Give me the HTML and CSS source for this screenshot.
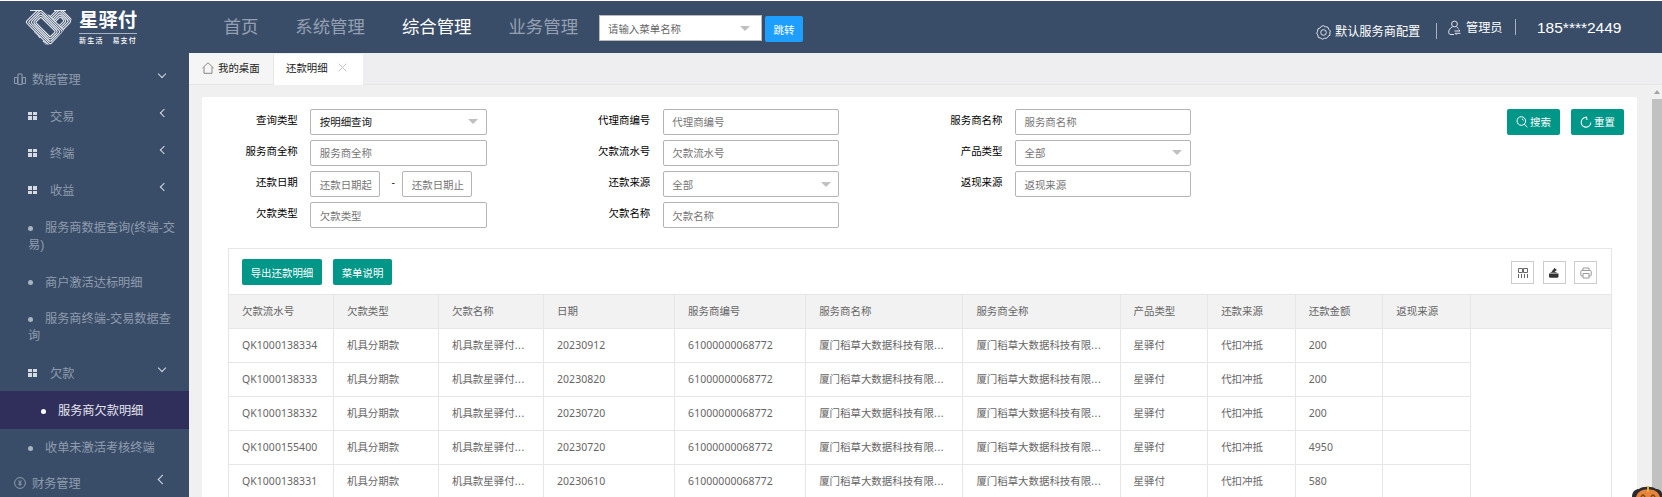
FILE: index.html
```html
<!DOCTYPE html>
<html lang="zh-CN">
<head>
<meta charset="utf-8">
<title>还款明细</title>
<link rel="stylesheet" href="styles.css">
</head>
<body>
<div class="app">
  <aside class="side">
    <div class="logo">
      <svg class="logo-mark" width="47" height="36" viewBox="0 0 47 36" fill="none">
        <clipPath id="heart"><path d="M5 1H17L23 6L29 1H41L46.500 8V13L26 35.500H20.500L0 13V8Z"/></clipPath>
        <g clip-path="url(#heart)" stroke="#e8ecf1" stroke-width="1.100">
          <g transform="translate(33 14) rotate(-45)">
            <rect x="-25" y="-10" width="37" height="20" rx="2"/>
            <rect x="-25" y="-8.200" width="35.500" height="16.400" rx="2"/>
            <rect x="-25" y="-6.400" width="34" height="12.800" rx="2"/>
            <rect x="-25" y="-4.600" width="32.500" height="9.200" rx="2"/>
            <rect x="-25" y="-2.800" width="31" height="5.600" rx="1"/>
          </g>
          <g transform="translate(20.500 18) rotate(45)">
            <rect x="-17.500" y="-10.600" width="35" height="21.200" rx="2" fill="#3a4d68"/>
            <rect x="-15.700" y="-8.900" width="31.400" height="17.800" rx="2"/>
            <rect x="-13.900" y="-7.200" width="27.800" height="14.400" rx="2"/>
            <rect x="-12.100" y="-5.500" width="24.200" height="11" rx="2"/>
            <rect x="-10.300" y="-3.800" width="20.600" height="7.600" rx="1"/>
          </g>
          <path d="M5 1.500H17M29 1.500H41"/>
        </g>
      </svg>
      <div class="logo-text">
        <div class="logo-name">星驿付</div>
        <div class="logo-sub"><span>新生活</span><span>易支付</span></div>
      </div>
    </div>
    <nav class="menu">
      <div class="m top"><svg class="ico" width="12" height="12" viewBox="0 0 12 12" fill="none" stroke="#8f9cae"><path d="M.5 4.500H3.500V10.500H.5ZM4 1H8V11.500H4ZM8.500 4.500H11.500V10.500H8.500Z"/></svg><span>数据管理</span><i class="down"></i></div>
      <div class="m sub"><b class="win"></b><span>交易</span><i class="left"></i></div>
      <div class="m sub"><b class="win"></b><span>终端</span><i class="left"></i></div>
      <div class="m sub"><b class="win"></b><span>收益</span><i class="left"></i></div>
      <div class="m leaf two"><b class="dot"></b>服务商数据查询(终端-交<br>易)</div>
      <div class="m leaf"><b class="dot"></b>商户激活达标明细</div>
      <div class="m leaf two"><b class="dot"></b>服务商终端-交易数据查<br>询</div>
      <div class="m sub"><b class="win"></b><span>欠款</span><i class="down"></i></div>
      <div class="m leaf active"><b class="dot"></b>服务商欠款明细</div>
      <div class="m leaf"><b class="dot"></b>收单未激活考核终端</div>
      <div class="m top last"><svg class="ico" width="12" height="12" viewBox="0 0 12 12" fill="none" stroke="#8f9cae"><circle cx="6" cy="6" r="5.400"/><path d="M6 3.500V9M4.300 3.500L6 5.500L7.700 3.500M4.300 6H7.700M4.300 7.500H7.700" stroke-width=".8"/></svg><span>财务管理</span><i class="left big"></i></div>
    </nav>
  </aside>
  <div class="main">
    <header class="head">
      <nav class="nav"><a>首页</a><a>系统管理</a><a class="on">综合管理</a><a>业务管理</a></nav>
      <div class="jump"><span>请输入菜单名称</span><i class="tri"></i></div>
      <button class="go">跳转</button>
      <div class="user">
        <div class="cfg"><svg width="15" height="15" viewBox="0 0 15 15" fill="none" stroke="#dfe4ea"><path d="M7.500 .7L9.400 1.800L11.700 2L12.700 4.200L14.300 5.900L13.800 8L14 10.200L12 11.400L10.600 13.300L8.500 13.300L6.500 14.200L4.500 13.100L2.300 12.400L1.900 10.100L.7 8.200L1.600 6.200L1.900 3.900L4 3L5.400 1.300Z"/><circle cx="7.500" cy="7.500" r="2.800"/></svg><span>默认服务商配置</span></div>
        <u class="bar low"></u>
        <div class="role"><svg width="13" height="16" viewBox="0 0 13 16" fill="none" stroke="#dfe4ea"><circle cx="6.500" cy="4" r="2.900"/><path d="M4.500 6.800C2 8 .7 10 .7 12.300C.7 13.800 1.500 14.500 3 14.500H6M8.500 6.800L10.500 8.500M6.500 11H12L10.500 9.500M12.500 13.300H7L8.500 14.800"/></svg><span>管理员</span></div>
        <u class="bar"></u>
        <div class="phone">185****2449</div>
      </div>
    </header>
    <div class="tabs">
      <div class="tab home"><svg width="12" height="12" viewBox="0 0 12 12" fill="none" stroke="#888"><path d="M.5 6L6 .8L11.500 6M2 5V11.300H10V5"/></svg><span>我的桌面</span></div>
      <div class="tab cur"><span>还款明细</span><svg width="9" height="9" viewBox="0 0 9 9" stroke="#c4c4c4"><path d="M.7 .7L8.300 8.300M8.300 .7L.7 8.300"/></svg></div>
    </div>
    <div class="body">
      <section class="card">
        <div class="search">
          <div class="form">
            <label>查询类型</label><div class="in dark">按明细查询<i class="tri"></i></div>
            <label>代理商编号</label><div class="in">代理商编号</div>
            <label>服务商名称</label><div class="in">服务商名称</div>
            <label>服务商全称</label><div class="in">服务商全称</div>
            <label>欠款流水号</label><div class="in">欠款流水号</div>
            <label>产品类型</label><div class="in">全部<i class="tri"></i></div>
            <label>还款日期</label><div class="range"><div class="in">还款日期起</div><span>-</span><div class="in">还款日期止</div></div>
            <label>还款来源</label><div class="in">全部<i class="tri"></i></div>
            <label>返现来源</label><div class="in">返现来源</div>
            <label>欠款类型</label><div class="in">欠款类型</div>
            <label>欠款名称</label><div class="in">欠款名称</div>
          </div>
          <div class="acts">
            <button class="btn"><svg width="12" height="12" viewBox="0 0 12 12" fill="none" stroke="#fff"><circle cx="5.300" cy="5" r="4.300"/><path d="M8.300 8.200L11.300 11.300M6 2.500L7.500 4.500"/></svg>搜索</button>
            <button class="btn"><svg width="12" height="12" viewBox="0 0 12 12" fill="none" stroke="#fff" stroke-width="1.100"><path d="M5 1.600A4.800 4.800 0 1 0 10.800 6.500M3.500 1.800L6.500 1.200L7 4"/></svg>重置</button>
          </div>
        </div>
        <div class="grid">
          <div class="tools">
            <button class="btn">导出还款明细</button><button class="btn">菜单说明</button>
            <div class="icons">
              <div class="ib"><svg width="12" height="12" viewBox="0 0 12 12" fill="none" stroke="#666"><path d="M1.500 1.500H5.500V5.500H1.500ZM6.500 1.500H10.500V5.500H6.500ZM1.500 7V11M4.500 7V11M7.500 7V11M10.500 7V11"/></svg></div>
              <div class="ib"><svg width="12" height="12" viewBox="0 0 12 12" fill="#333"><path d="M1 6.500H10.500V9.500Q10.500 10.800 9 10.800H2.500Q1 10.800 1 9.500ZM2 5.700L4 4.500Q4.500 2.500 6 2V.8L9 3L6.500 4.500L9.500 5.700Z"/></svg></div>
              <div class="ib"><svg width="12" height="12" viewBox="0 0 12 12" fill="none" stroke="#999"><path d="M3 3.500V1H9V3.500M3 9H1.500Q.8 9 .8 8V4.500Q.8 3.500 2 3.500H10Q11.200 3.500 11.200 4.500V8Q11.200 9 10.500 9H9M3 6.500H9V11H3Z"/></svg></div>
            </div>
          </div>
          <table>
            <colgroup><col class="w1"><col class="w1"><col class="w1"><col class="w2"><col class="w2"><col class="w3"><col class="w3"><col class="w4"><col class="w4"><col class="w4"><col class="w4"><col></colgroup>
            <thead><tr><th>欠款流水号</th><th>欠款类型</th><th>欠款名称</th><th>日期</th><th>服务商编号</th><th>服务商名称</th><th>服务商全称</th><th>产品类型</th><th>还款来源</th><th>还款金额</th><th>返现来源</th><th class="rest"></th></tr></thead>
            <tbody>
              <tr><td class="n">QK1000138334</td><td>机具分期款</td><td>机具款星驿付<em>...</em></td><td class="n">20230912</td><td class="n">61000000068772</td><td>厦门稻草大数据科技有限<em>...</em></td><td>厦门稻草大数据科技有限<em>...</em></td><td>星驿付</td><td>代扣冲抵</td><td class="n">200</td><td></td><td class="rest"></td></tr>
              <tr><td class="n">QK1000138333</td><td>机具分期款</td><td>机具款星驿付<em>...</em></td><td class="n">20230820</td><td class="n">61000000068772</td><td>厦门稻草大数据科技有限<em>...</em></td><td>厦门稻草大数据科技有限<em>...</em></td><td>星驿付</td><td>代扣冲抵</td><td class="n">200</td><td></td><td class="rest"></td></tr>
              <tr><td class="n">QK1000138332</td><td>机具分期款</td><td>机具款星驿付<em>...</em></td><td class="n">20230720</td><td class="n">61000000068772</td><td>厦门稻草大数据科技有限<em>...</em></td><td>厦门稻草大数据科技有限<em>...</em></td><td>星驿付</td><td>代扣冲抵</td><td class="n">200</td><td></td><td class="rest"></td></tr>
              <tr><td class="n">QK1000155400</td><td>机具分期款</td><td>机具款星驿付<em>...</em></td><td class="n">20230720</td><td class="n">61000000068772</td><td>厦门稻草大数据科技有限<em>...</em></td><td>厦门稻草大数据科技有限<em>...</em></td><td>星驿付</td><td>代扣冲抵</td><td class="n">4950</td><td></td><td class="rest"></td></tr>
              <tr><td class="n">QK1000138331</td><td>机具分期款</td><td>机具款星驿付<em>...</em></td><td class="n">20230610</td><td class="n">61000000068772</td><td>厦门稻草大数据科技有限<em>...</em></td><td>厦门稻草大数据科技有限<em>...</em></td><td>星驿付</td><td>代扣冲抵</td><td class="n">580</td><td></td><td class="rest"></td></tr>
            </tbody>
          </table>
        </div>
      </section>
      <div class="scroll"><i class="up"></i><div class="thumb"></div></div>
    </div>
  </div>
  <svg class="mascot" width="30" height="11" viewBox="0 0 30 11"><path d="M0 11C0 5 4 3 7 3C10 0 21 0 24 3C27 3 30 5 30 8V11Z" fill="#2b2a2c"/><path d="M4 11C6 5 10 3.500 16 3.500C22 3.500 26 5 28 11Z" fill="#e8833a"/><path d="M15 0H17V6H15Z" fill="#d9b24a"/><path d="M9 11Q11 7 13 11M19 11Q21 7 23 11" fill="none" stroke="#7a4a1c" stroke-width="1.500"/></svg>
</div>
</body>
</html>
```
FILE: styles.css
```css
* { box-sizing: border-box; }
body { margin: 0; font-family: "Liberation Sans", "Noto Sans CJK SC", sans-serif; font-size: 10.45px; color: #222; }
.app { position: relative; width: 1662px; height: 497px; overflow: hidden; display: flex; border-top: 1px solid #fff; }
svg { flex: none; display: block; }
button { border: 0; padding: 0; font: inherit; }

.side { width: 189px; flex: none; background: #3a4d68; }
.logo { height: 60px; display: flex; padding: 8px 0 0 25px; gap: 7px; }
.logo-text { width: 58px; color: #fff; }
.logo-name { font-size: 19.4px; line-height: 23px; font-weight: 700; border-bottom: 1px solid #a9b4c3; height: 25px; white-space: nowrap; }
.logo-sub { display: flex; justify-content: space-between; font-size: 7px; line-height: 13px; letter-spacing: 1.2px; font-weight: 500; white-space: nowrap; color: #fff; }
.menu { font-size: 12.2px; color: #8f9cae; }
.m { display: flex; align-items: center; height: 37.3px; position: relative; white-space: nowrap; }
.top { height: 36px; padding-left: 14px; gap: 6px; }
.sub { padding-left: 28px; gap: 13px; }
.win { width: 9px; height: 8px; background: linear-gradient(#3a4d68, #3a4d68) 4px 0 / 1px 8px no-repeat, linear-gradient(#3a4d68, #3a4d68) 0 3.500px / 9px 1px no-repeat, #d5dae1; }
.m i { margin-left: auto; width: 6px; height: 6px; border: solid #d5dae1; border-width: 0 0 1.500px 1.500px; }
.m .down { margin-right: 24px; transform: translateY(-5px) rotate(-45deg); }
.m .left { margin-right: 22px; transform: translateY(-3px) rotate(45deg); }
.m .big { width: 7px; height: 7px; margin-right: 23px; }
.leaf { padding-left: 28px; }
.dot { width: 5px; height: 5px; border-radius: 50%; background: #a9b4c1; margin-right: 12px; display: inline-block; vertical-align: middle; position: relative; top: 1px; }
.two { display: block; height: 54px; padding-top: 11px; line-height: 16.7px; }
.two .dot { top: 0; }
.active { background: #302f5c; color: #e3e3ec; padding-left: 41px; }
.active .dot { background: #fff; }
.last { height: 33px; }

.main { flex: 1; min-width: 0; display: flex; flex-direction: column; }
.head { height: 52px; flex: none; background: #3a4d68; display: flex; align-items: flex-start; padding-left: 34.500px; }
.nav { display: flex; gap: 37px; font-size: 17.4px; line-height: 53px; color: #94a0b1; width: 375.500px; white-space: nowrap; }
.nav .on { color: #fff; }
.jump { width: 163px; height: 26px; margin-top: 14px; background: #fff; border: 1px solid #bbb; padding: 0 8px; display: flex; align-items: center; color: #666; }
.tri { border: 5px solid transparent; border-top-color: #c0c0c0; border-bottom: 0; margin-left: auto; margin-right: -1px; }
.jump .tri { margin-right: 3px; }
.go { width: 38px; height: 26px; margin: 15px 0 0 3px; background: #1e9fff; color: #fff; border-radius: 2px; }
.user { margin-left: 513px; display: flex; color: #fff; font-size: 12.2px; line-height: 18px; white-space: nowrap; }
.cfg { display: flex; gap: 4px; align-items: center; padding-top: 22px; height: 40px; width: 120px; }
.bar { width: 1px; height: 16px; background: #a9b3c0; margin-top: 18px; }
.bar.low { margin-top: 22px; }
.role { display: flex; align-items: center; gap: 5px; height: 36px; margin: 9px 13px 0 11px; width: 54px; }
.phone { font-size: 15.5px; margin: 18px 0 0 21px; }

.tabs { height: 32px; flex: none; background: #eeeef0; display: flex; border-bottom: 1px solid #e6e6e8; color: #222; }
.tab { display: flex; align-items: center; height: 30px; }
.home { width: 84px; background: #f5f5f5; padding-left: 13px; gap: 4px; height: 31px; padding-bottom: 2px; }
.cur { width: 90px; margin: 1px 0 -1px; height: 31px; background: #fff; border-left: 1px solid #e6e6e6; padding-left: 12px; gap: 10px; padding-bottom: 4px; }

.body { flex: 1; display: flex; background: #f0f0f0; min-height: 0; }
.card { width: 1435px; height: 500px; margin: 12px 15px 0 13px; background: #fff; border-radius: 2px; flex: none; }
.search { display: flex; justify-content: space-between; height: 151px; padding: 11px 13px 0 0; }
.form { display: grid; grid-template-columns: 108.300px 176.500px 176px 176.500px 175.700px 176px; grid-auto-rows: 26px; row-gap: 5.250px; padding-top: .6px; }
.form label { text-align: right; padding-right: 12.500px; line-height: 24px; color: #000; }
.in { border: 1px solid #b4b4b6; border-radius: 2px; padding: 0 8.500px; display: flex; align-items: center; color: #757575; background: #fff; white-space: nowrap; }
.dark { color: #111; }
.range { display: flex; }
.range .in { width: 70px; }
.range span { width: 22px; text-align: center; line-height: 24px; padding-left: 4px; }
.acts { display: flex; gap: 11px; padding-top: .6px; }
.btn { height: 26px; background: #009688; color: #fff; border-radius: 2px; display: flex; align-items: center; justify-content: center; gap: 2px; white-space: nowrap; }
.acts .btn { width: 53px; }

.grid { width: 1384px; margin-left: 26px; border: 1px solid #e6e6e6; border-bottom: 0; }
.tools { height: 45px; display: flex; align-items: flex-start; padding: 10px 14px 0 13px; gap: 11px; }
.tools .btn { width: 80px; }
.tools .btn + .btn { width: 59px; }
.icons { margin-left: auto; display: flex; gap: 8.500px; padding-top: 2px; }
.ib { width: 23px; height: 23px; border: 1px solid #ccc; display: flex; align-items: center; justify-content: center; }
table { width: 100%; table-layout: fixed; border-collapse: separate; border-spacing: 0; color: #666; font-family: "Noto Sans", "Noto Sans CJK SC", sans-serif; border-top: 1px solid #e6e6e6; }
.w1 { width: 105px; }
.w2 { width: 131.100px; }
.w3 { width: 157.200px; }
.w4 { width: 87.600px; }
th, td { height: 34px; padding: 0 0 0 13px; border: solid #e6e6e6; border-width: 0 1px 1px 0; text-align: left; font-weight: 400; white-space: nowrap; line-height: 15px; }
th { background: #f2f2f2; height: 34px; }
th.rest { border-right: 0; }
td.rest { border: 0; }
td em { font-style: normal; letter-spacing: .6px; }
.n { letter-spacing: .08px; }

.scroll { width: 10px; background: #f1f1f1; display: flex; flex-direction: column; align-items: center; }
.up { border: 3.500px solid transparent; border-bottom: 4px solid #a3a3a3; border-top: 0; margin: 5px 0; }
.thumb { width: 10px; flex: 1; background: #c1c1c1; }
.mascot { position: absolute; right: 0; bottom: 0; }
```
